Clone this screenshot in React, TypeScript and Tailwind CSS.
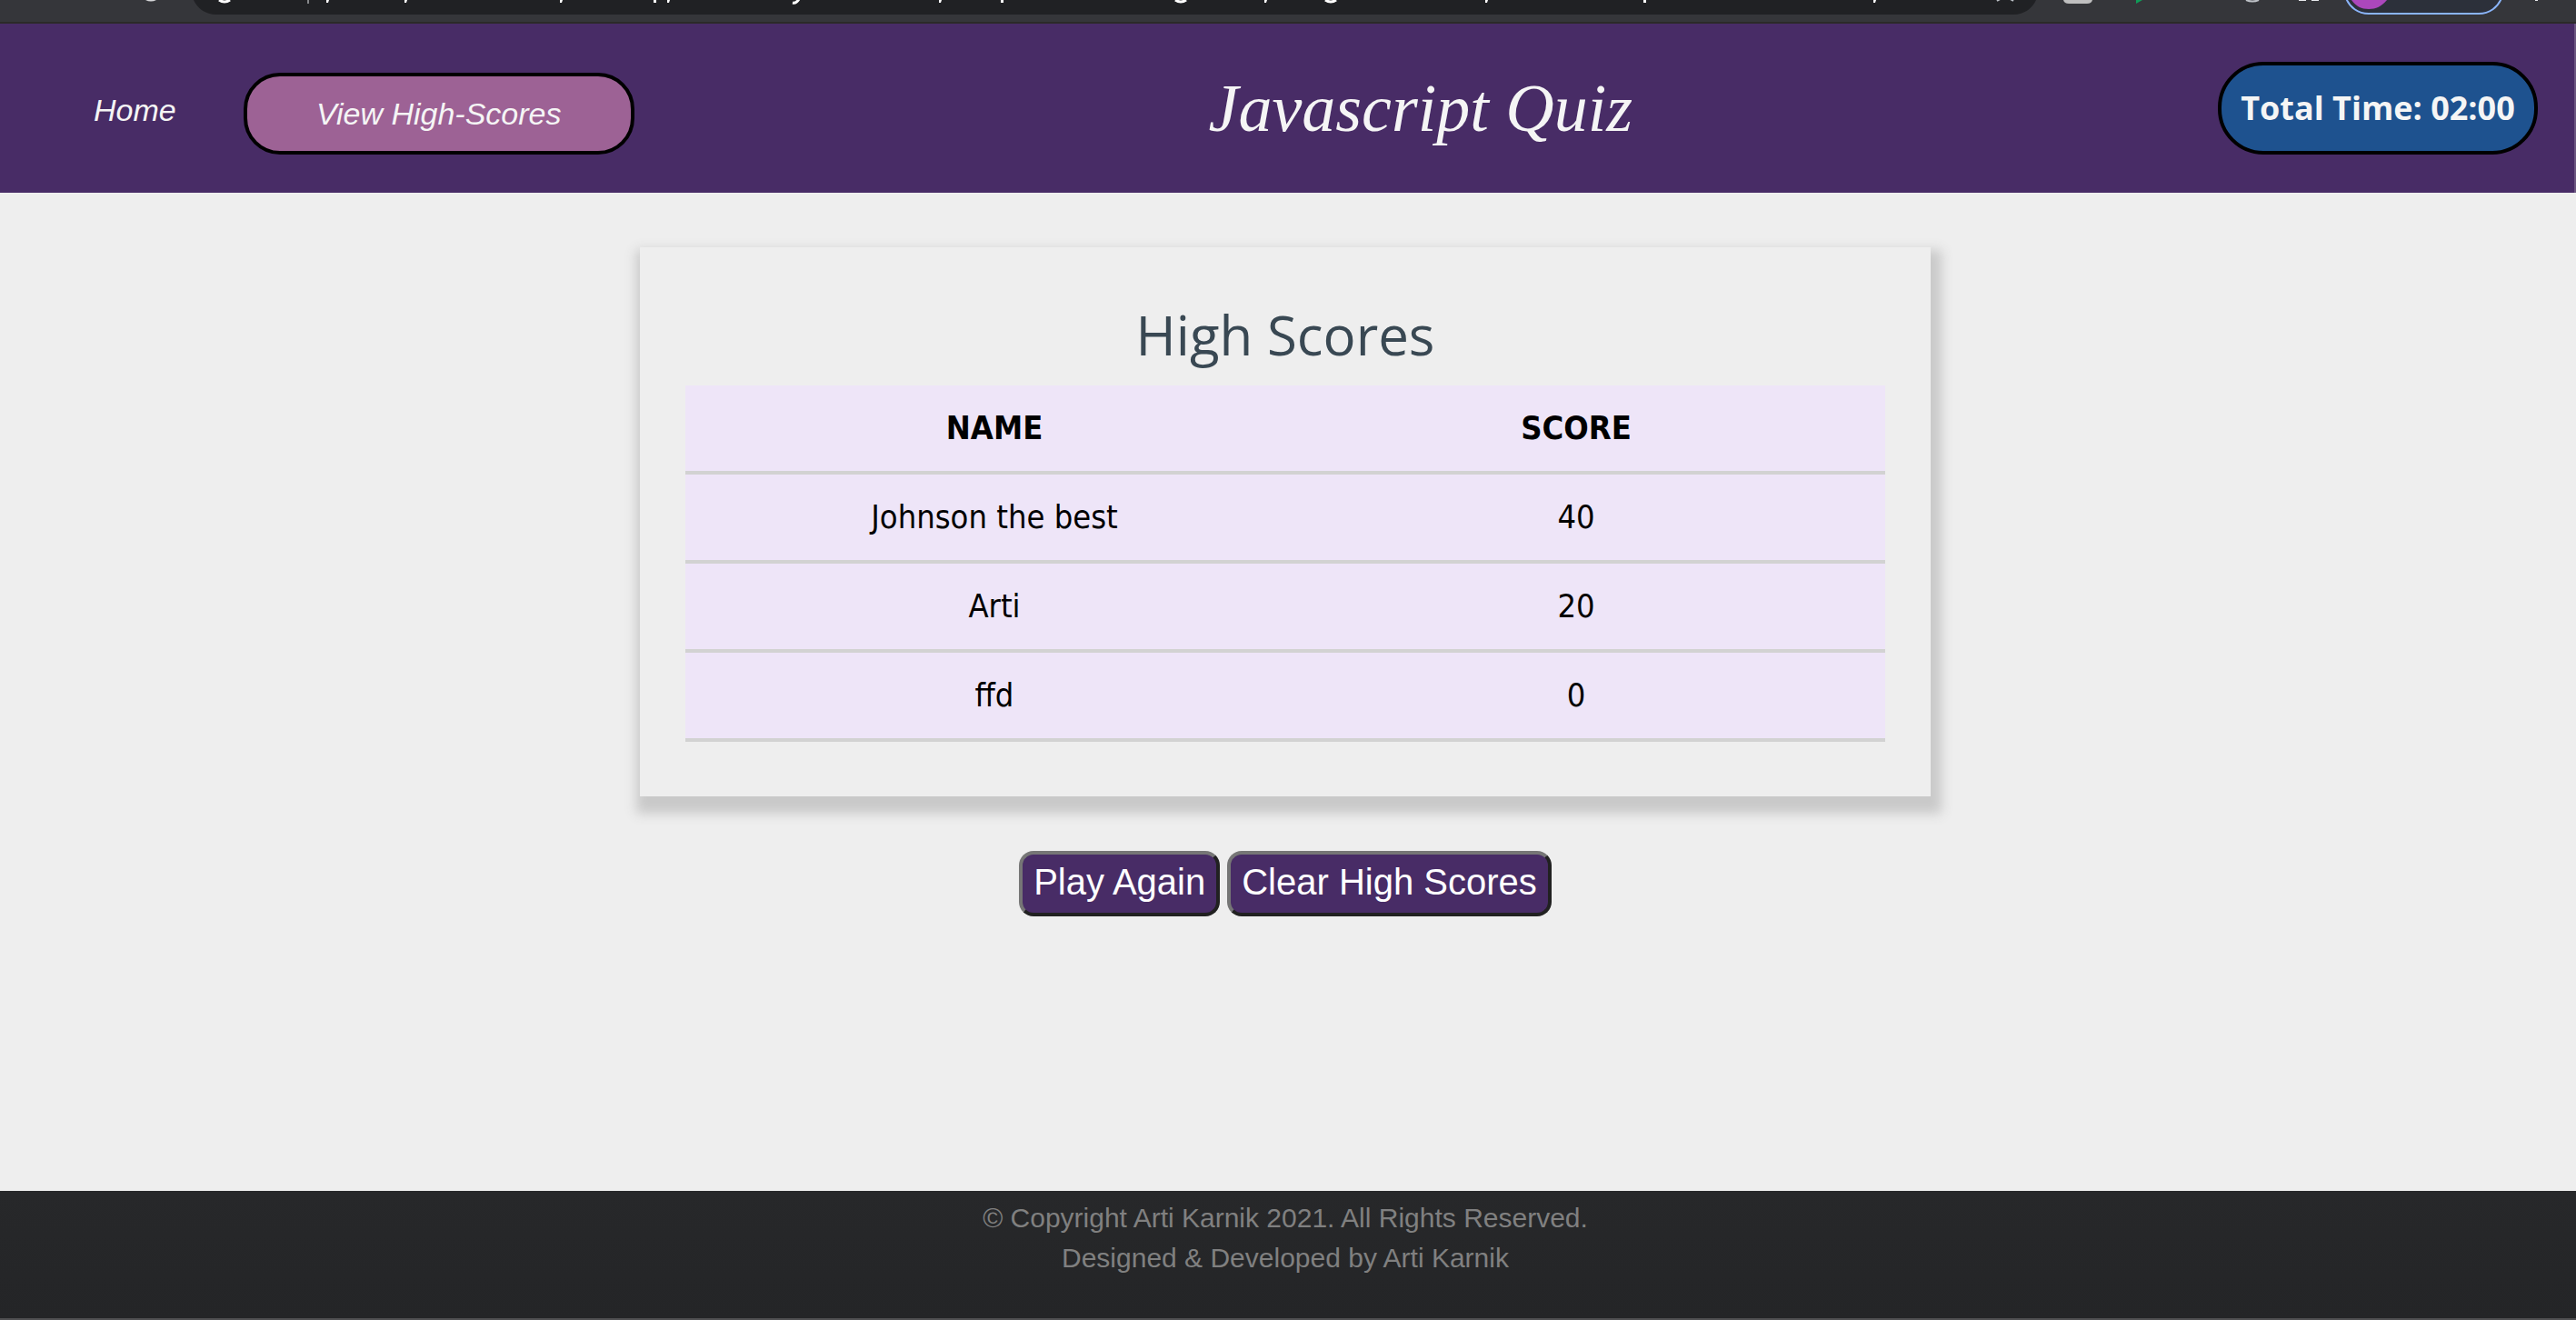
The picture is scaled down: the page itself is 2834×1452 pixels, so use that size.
const scores = [
  { name: "Johnson the best", score: 40 },
  { name: "Arti", score: 20 },
  { name: "ffd", score: 0 },
];

const strokes = [359, 445, 616, 734, 1033, 1391, 1634, 2061];
const stems = [719, 1101, 1808];
const bowls = [247, 1299, 1464];

function BrowserBar() {
  return (
    <div className="flex h-[26px] items-start overflow-hidden border-b-2 border-[#2b2a29] bg-[#35363a]">
      <svg className="h-6 w-[2834px] shrink-0" viewBox="0 0 2834 24" aria-hidden="true">
        <path d="M160 0 Q166 3 172 0Z" fill="#d5d6d8" />
        <path d="M213 0 C217 9 226 16 238 16 H2215 C2227 16 2236 9 2240 0Z" fill="#202124" />
        <rect x="338" y="0" width="2" height="4" fill="#85878a" />
        {strokes.map((x) => (
          <path key={x} d={`M${x} 0 h3 l-1 3 h-2Z`} fill="#fff" />
        ))}
        {stems.map((x) => (
          <rect key={x} x={x} y="0" width="3" height="3" fill="#fff" />
        ))}
        {bowls.map((x) => (
          <path key={x} d={`M${x - 6} 0 q6 4 12 0`} stroke="#fff" strokeWidth="3" fill="none" />
        ))}
        <path d="M872 3 q4 1 7 -4" stroke="#fff" strokeWidth="3" fill="none" />
        <path d="M2197 1 l5 -3 M2210 -2 l5 3" stroke="#bdc1c6" strokeWidth="2" fill="none" />
        <path d="M2270 0 h32 q-1 4 -6 4 h-20 q-5 0 -6 -4Z" fill="#bfbfbf" />
        <path d="M2350 0 h7 l-7 4Z" fill="#0f9d58" />
        <path d="M2471 0 q7 3 14 0" stroke="#bdc1c6" strokeWidth="2" fill="none" />
        <path d="M2529 0 h8 M2543 0 h8" stroke="#e8eaed" strokeWidth="2" />
        <path
          d="M2581 -2 C2585 8 2594 15 2606 15 H2727 C2739 15 2748 8 2752 -2"
          fill="#2c303a"
          stroke="#8ab4f8"
          strokeWidth="2"
        />
        <path d="M2587 0 C2592 7 2598 10 2606 10 S2620 7 2626 0Z" fill="#ab47bc" />
        <rect x="2789" y="0" width="3" height="1" fill="#e8eaed" />
      </svg>
    </div>
  );
}

function Header() {
  return (
    <header className="flex h-[186px] items-center justify-between border-r-2 border-[#6b5580] bg-[#482c66] pr-[40px] pl-[103px] text-[#f5f5f5]">
      <nav className="flex items-center gap-[74px] pt-3 text-[34px] leading-[46px] italic">
        <a href="#home" className="pb-2">Home</a>
        <a
          href="#scores"
          className="flex h-[90px] w-[430px] items-center justify-center rounded-[40px] border-4 border-black bg-[#9d6295]"
        >
          View High-Scores
        </a>
      </nav>
      <h1 className="pr-3 font-['Liberation_Serif',serif] text-[74px] leading-[80px] italic">Javascript Quiz</h1>
      <div className="flex h-[102px] w-[352px] items-center justify-center rounded-[50px] border-4 border-black bg-[#1e528f] font-['Open_Sans',sans-serif] text-[36px] font-bold">
        Total Time: 02:00
      </div>
    </header>
  );
}

const actionButton =
  "h-[72px] rounded-[16px] border-4 border-t-[#767676] border-r-[#212121] border-b-[#212121] border-l-[#767676] bg-[#482c66] px-3 pb-1 text-[40px] leading-[60px] text-white";

export default function App() {
  return (
    <div className="flex min-h-screen flex-col bg-[#eeeeee] font-['Liberation_Sans',sans-serif]">
      <BrowserBar />
      <Header />
      <main className="flex flex-1 flex-col items-center pt-[60px] pr-[6px]">
        <section className="w-full max-w-[1420px] bg-[#eeeeee] px-[50px] pt-[56px] pb-[60px] shadow-[4px_11px_12px_8px_#c9c9c9]">
          <h2 className="pb-4 text-center font-['Open_Sans',sans-serif] text-[60px] leading-[80px] font-medium text-[#394853]">
            High Scores
          </h2>
          <table className="w-full table-fixed bg-[#eee5f8] text-center font-['DejaVu_Sans_Condensed','DejaVu_Sans',sans-serif] text-[36px] leading-[54px] text-black">
            <thead>
              <tr className="border-b-4 border-[#d2d2d2]">
                <th scope="col" className="w-[680px] py-5">NAME</th>
                <th scope="col" className="py-5 pr-[40px]">SCORE</th>
              </tr>
            </thead>
            <tbody>
              {scores.map((row) => (
                <tr key={row.name} className="border-b-4 border-[#d2d2d2]">
                  <td className="py-5">{row.name}</td>
                  <td className="py-5 pr-[40px]">{row.score}</td>
                </tr>
              ))}
            </tbody>
          </table>
        </section>
        <div className="flex gap-2 pt-[60px]">
          <button type="button" className={actionButton}>Play Again</button>
          <button type="button" className={actionButton}>Clear High Scores</button>
        </div>
      </main>
      <footer className="h-[142px] border-b-2 border-[#505052] bg-linear-to-b from-[#27282a] to-[#242527] pt-2 pr-[6px] text-center text-[30px] leading-[44px] text-[#808080]">
        <p>© Copyright Arti Karnik 2021. All Rights Reserved.</p>
        <p>Designed &amp; Developed by Arti Karnik</p>
      </footer>
    </div>
  );
}
